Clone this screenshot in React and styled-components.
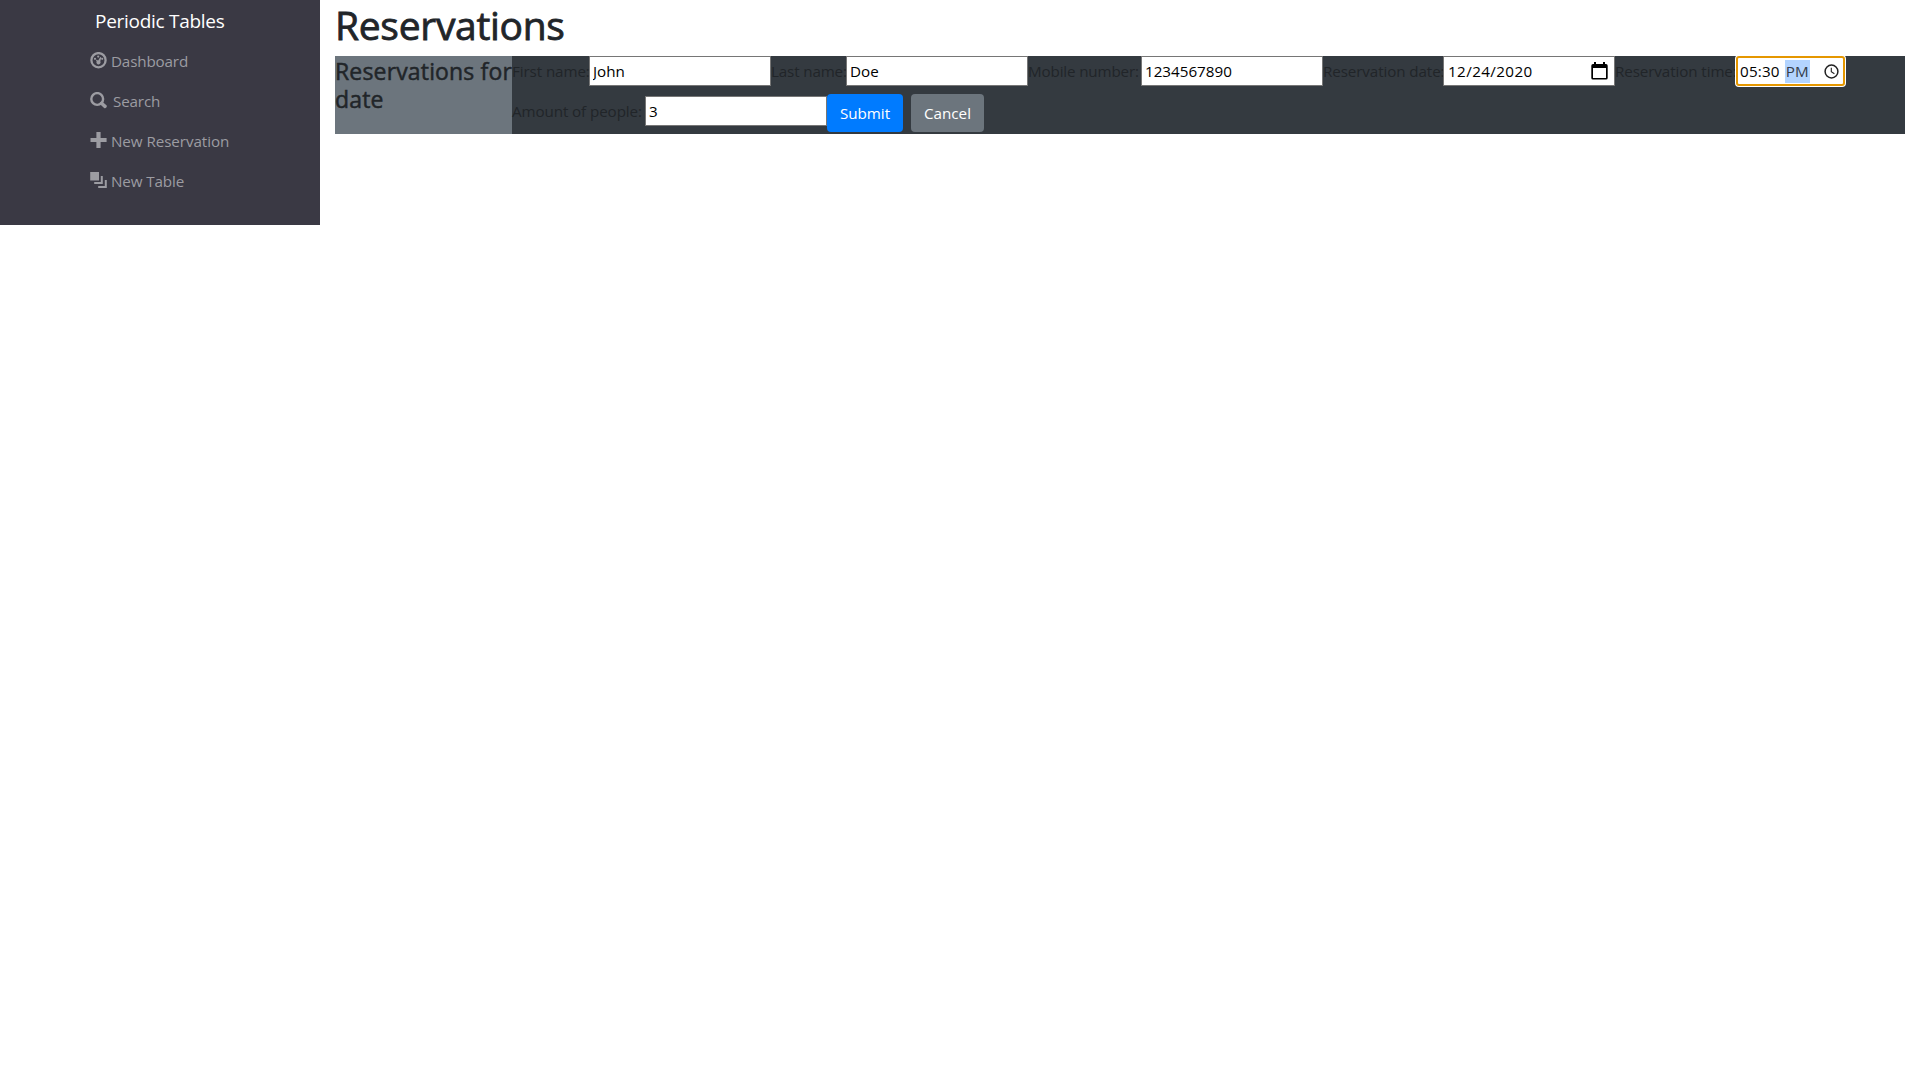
import React from "react";
import styled, { createGlobalStyle } from "styled-components";

const Global = createGlobalStyle`
  *, *::before, *::after { box-sizing: border-box; }
  body {
    margin: 0;
    background: #fff;
    color: #212529;
    font-family: "Open Sans", "Noto Sans", sans-serif;
    font-size: 15.2px;
    line-height: 24px;
  }
`;

const Page = styled.div`
  display: flex;
  align-items: flex-start;
`;

const Sidebar = styled.nav`
  width: 320px;
  height: 225px;
  padding-left: 90px;
  background: #3a3944;
`;

const Brand = styled.div`
  height: 41px;
  padding: 7px 0 0 5px;
  color: #fff;
  font-size: 19px;
  line-height: 28px;
  white-space: nowrap;
`;

const NavItem = styled.a`
  display: flex;
  height: 40px;
  padding-top: 8px;
  color: #9c9ca2;
  white-space: nowrap;

  svg {
    display: block;
    margin: 3px 4px 0 0;
    flex: none;
  }
`;

const Text = styled.span`
  letter-spacing: ${(p) => p.$spacing || 0}px;
  margin-left: ${(p) => p.$indent || 0}px;
`;

const Main = styled.main`
  flex: 1;
  padding: 0 15px;
`;

const Title = styled.h1`
  margin: 0;
  height: 56px;
  padding-top: 1px;
  font-size: 39px;
  font-weight: 500;
  line-height: 48px;
  -webkit-text-stroke: 0.8px #212529;
`;

const Panel = styled.section`
  display: flex;
  height: 78px;
  background: #343a40;
`;

const DateHeading = styled.h2`
  width: 177px;
  margin: 0;
  padding-top: 1px;
  background: #6c757d;
  font-size: 23px;
  font-weight: 500;
  line-height: 28px;
  white-space: nowrap;
  -webkit-text-stroke: 0.5px #212529;
`;

const Form = styled.form`
  flex: 1;
`;

const FormRow = styled.div`
  display: flex;
  align-items: flex-start;
  height: ${(p) => p.$height}px;
`;

const Label = styled.label`
  width: ${(p) => p.$width}px;
  padding-top: 3px;
  letter-spacing: ${(p) => p.$spacing || 0}px;
  white-space: nowrap;
`;

const Input = styled.input`
  width: 182px;
  height: 30px;
  padding: 1px 3px;
  border: 1px solid #767676;
  border-radius: 0;
  outline: none;
  background: #fff;
  color: #000;
  font: inherit;
`;

const Picker = styled.div`
  display: flex;
  align-items: center;
  justify-content: space-between;
  width: ${(p) => p.$width}px;
  height: 30px;
  padding: 0 6px 0 4px;
  border: 1px solid #767676;
  background: #fff;
  color: #000;
  letter-spacing: ${(p) => p.$spacing || 0}px;
  white-space: pre;

  svg { display: block; }
`;

const FocusedPicker = styled(Picker)`
  padding: 0 4px 0 2px;
  border: 2px solid #e59700;
  border-radius: 3px;
  box-shadow: 0 0 0 1px #fff;
`;

const Period = styled.span`
  display: inline-block;
  height: 23px;
  margin-left: 5px;
  padding: 0 1px;
  background: #b3d4ff;
  color: #333c49;
  line-height: 23px;
`;

const Button = styled.button`
  width: ${(p) => p.$width}px;
  height: 38px;
  margin: -2px 8px 0 0;
  padding: 0 0 1px;
  border: 0;
  border-radius: 4px;
  background: ${(p) => p.$color};
  color: #fff;
  font: inherit;
`;

const DashboardIcon = () => (
  <svg width="17" height="17" viewBox="0 0 17 17" fill="currentColor">
    <circle cx="8.5" cy="8.2" r="7.1" fill="none" stroke="currentColor" strokeWidth="2.3" />
    <circle cx="5" cy="6.8" r="1.1" />
    <circle cx="8.2" cy="4.6" r="1.1" />
    <circle cx="12.2" cy="6.8" r="1.1" />
    <path d="M5.8 7.4 L8.2 8.5 L10.3 4.9 L11.3 5.5 L10.3 9.2 A2.1 2.1 0 1 1 6.6 9.4 Z" />
  </svg>
);

const SearchIcon = () => (
  <svg width="17" height="17" viewBox="0 0 17 17" fill="none" stroke="currentColor">
    <circle cx="7.2" cy="7" r="5.9" strokeWidth="2.4" />
    <path d="M11.5 11.3 L15 14.4" strokeWidth="3.5" strokeLinecap="round" />
  </svg>
);

const PlusIcon = () => (
  <svg width="17" height="17" viewBox="0 0 17 17" fill="currentColor">
    <path d="M6.4 0h4.2v6h6v4h-6v6H6.4v-6H.5V6h5.9z" />
  </svg>
);

const LayersIcon = () => (
  <svg width="17" height="17" viewBox="0 0 17 17" fill="currentColor">
    <path d="M.2 0H9v8.5H.2z" />
    <path d="M10.8 4h2v8H4.2v-2h6.6z" />
    <path d="M14.8 8h2v8H8.2v-2h6.6z" />
  </svg>
);

const CalendarIcon = () => (
  <svg width="17" height="18" viewBox="0 0 17 18">
    <path d="M3 0h2v2h7V0h2v2h1a1.7 1.7 0 0 1 1.7 1.7v12.2a1.7 1.7 0 0 1-1.7 1.7H2a1.7 1.7 0 0 1-1.7-1.7V3.7A1.7 1.7 0 0 1 2 2h1zM2 6v10h13V6z" fill="#000" fillRule="evenodd" />
  </svg>
);

const ClockIcon = () => (
  <svg width="15" height="15" viewBox="0 0 15 15" fill="none" stroke="#222">
    <circle cx="7.5" cy="7.5" r="6.4" strokeWidth="1.5" />
    <path d="M7.3 3.8v4l3.1 1.9" strokeWidth="1.1" />
  </svg>
);

export default function App() {
  return (
    <Page>
      <Global />
      <Sidebar>
        <Brand><Text $spacing={-0.28}>Periodic Tables</Text></Brand>
        <NavItem><DashboardIcon /><Text $spacing={-0.15}>Dashboard</Text></NavItem>
        <NavItem><SearchIcon /><Text $indent={2} $spacing={-0.15}>Search</Text></NavItem>
        <NavItem><PlusIcon /><Text $spacing={-0.07}>New Reservation</Text></NavItem>
        <NavItem><LayersIcon /><Text $spacing={-0.12}>New Table</Text></NavItem>
      </Sidebar>
      <Main>
        <Title><Text $spacing={-0.3}>Reservations</Text></Title>
        <Panel>
          <DateHeading>
            <Text $spacing={0.16}>Reservations for<br />date</Text>
          </DateHeading>
          <Form>
            <FormRow $height={40}>
              <Label $width={77} $spacing={-0.1}>First name:</Label>
              <Input defaultValue="John" />
              <Label $width={75} $spacing={-0.15}>Last name:</Label>
              <Input defaultValue="Doe" />
              <Label $width={113} $spacing={-0.15}>Mobile number:</Label>
              <Input defaultValue="1234567890" />
              <Label $width={120} $spacing={-0.1}>Reservation date:</Label>
              <Picker $width={172} $spacing={0.4}>12/24/2020<CalendarIcon /></Picker>
              <Label $width={121} $spacing={-0.1}>Reservation time:</Label>
              <FocusedPicker $width={109} $spacing={0.2}>
                <span>05:30<Period>PM</Period></span>
                <ClockIcon />
              </FocusedPicker>
            </FormRow>
            <FormRow $height={38}>
              <Label $width={133} $spacing={-0.1}>Amount of people:</Label>
              <Input defaultValue="3" />
              <Button type="button" $width={76} $color="#007bff">Submit</Button>
              <Button type="button" $width={73} $color="#6c757d">Cancel</Button>
            </FormRow>
          </Form>
        </Panel>
      </Main>
    </Page>
  );
}
